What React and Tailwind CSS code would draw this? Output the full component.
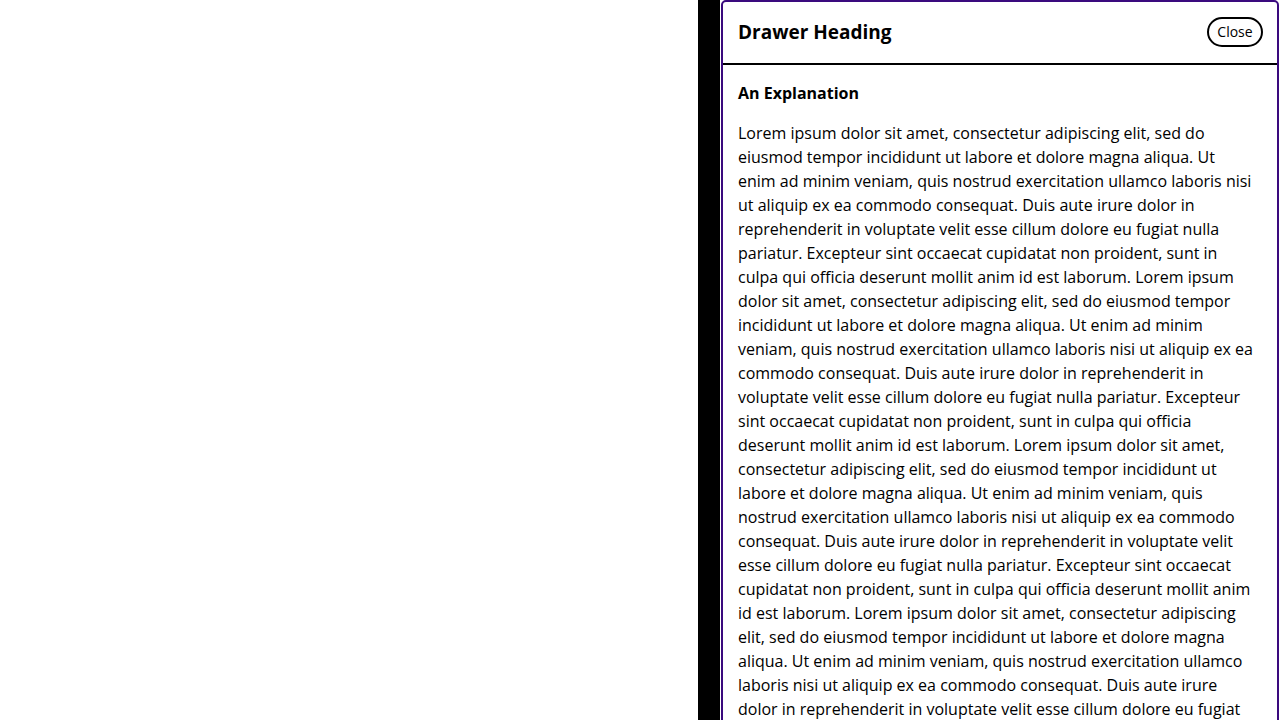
const LOREM =
  'Lorem ipsum dolor sit amet, consectetur adipiscing elit, sed do eiusmod tempor incididunt ut labore et dolore magna aliqua. Ut enim ad minim veniam, quis nostrud exercitation ullamco laboris nisi ut aliquip ex ea commodo consequat. Duis aute irure dolor in reprehenderit in voluptate velit esse cillum dolore eu fugiat nulla pariatur. Excepteur sint occaecat cupidatat non proident, sunt in culpa qui officia deserunt mollit anim id est laborum.'

export default function App() {
  const text = Array(6).fill(LOREM).join(' ')

  return (
    <div className="flex h-[720px] overflow-hidden bg-white font-['Open_Sans',sans-serif] text-black">
      <div className="w-[698px] shrink-0" />
      <div className="w-[22px] shrink-0 bg-black" />
      <div className="ml-px mr-px flex w-[558px] shrink-0 flex-col self-start rounded-[5px] border-2 border-[#3a0a7e] bg-white">
        <div className="flex h-[63px] items-center justify-between border-b-2 border-black pb-[2px] pl-[15px] pr-[14px]">
          <h2 className="text-[19px] font-bold leading-7">Drawer Heading</h2>
          <button className="h-[30px] w-[56px] rounded-full border-2 border-black text-[14px] leading-5">Close</button>
        </div>
        <div className="py-4 pl-[15px]">
          <h3 className="text-[16px] font-bold leading-6">An Explanation</h3>
          <p className="mt-4 w-[516px] text-[16px] leading-6">{text}</p>
        </div>
      </div>
    </div>
  )
}
